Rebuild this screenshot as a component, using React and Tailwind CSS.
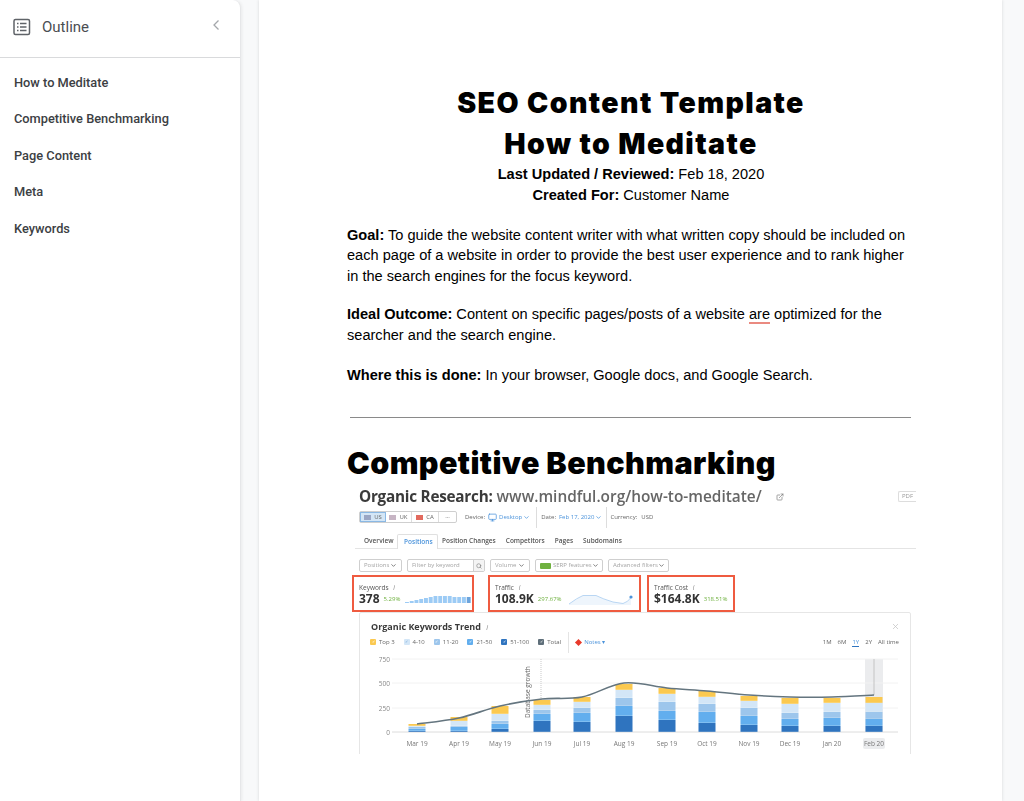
import React from 'react';
import { ChevronDown, ExternalLink, Monitor, Search, X } from 'lucide-react';

const OUTLINE = ['How to Meditate', 'Competitive Benchmarking', 'Page Content', 'Meta', 'Keywords'];

// bottom-up segment heights: dark, mid, light, pale, yellow
const BARS = [
  { x: 417, label: 'Mar 19', seg: [1, 2, 2, 1, 2] },
  { x: 459, label: 'Apr 19', seg: [1, 4, 1, 5, 4] },
  { x: 500, label: 'May 19', seg: [3, 5, 3, 7, 8] },
  { x: 542, label: 'Jun 19', seg: [11, 7, 4, 5, 5] },
  { x: 582, label: 'Jul 19', seg: [10, 9, 5, 6, 5] },
  { x: 624, label: 'Aug 19', seg: [16, 10, 8, 8, 6] },
  { x: 667, label: 'Sep 19', seg: [12, 9, 9, 8, 6] },
  { x: 707, label: 'Oct 19', seg: [9, 11, 8, 7, 6] },
  { x: 749, label: 'Nov 19', seg: [7, 9, 8, 7, 5] },
  { x: 790, label: 'Dec 19', seg: [6, 7, 6, 9, 6] },
  { x: 832, label: 'Jan 20', seg: [6, 8, 6, 9, 5] },
  { x: 874, label: 'Feb 20', seg: [6, 7, 7, 9, 6] },
];
const SEG_COLORS = ['#2f74bf', '#62aeee', '#9dc6ec', '#d3e6f7', '#fbc950'];
const TREND = [724, 718, 706, 699, 697, 683, 688, 691, 695, 697, 697, 695];

// chart svg starts at page x=360, y=650
const OX = 360;
const OY = 650;

function smoothPath(points) {
  let d = `M${points[0][0]} ${points[0][1]}`;
  for (let i = 0; i < points.length - 1; i++) {
    const p0 = points[Math.max(i - 1, 0)];
    const p1 = points[i];
    const p2 = points[i + 1];
    const p3 = points[Math.min(i + 2, points.length - 1)];
    d += ` C${p1[0] + (p2[0] - p0[0]) / 6} ${p1[1] + (p2[1] - p0[1]) / 6} ${p2[0] - (p3[0] - p1[0]) / 6} ${p2[1] - (p3[1] - p1[1]) / 6} ${p2[0]} ${p2[1]}`;
  }
  return d;
}

function OutlineIcon() {
  return (
    <svg width="18" height="18" viewBox="0 0 18 18" fill="none" className="shrink-0">
      <rect x="1" y="1.5" width="15.5" height="15" rx="1.5" stroke="#5f6368" strokeWidth="1.5" />
      <path d="M4 5.5h1.5M7 5.5h6.5M4 9h1.5M7 9h6.5M4 12.5h1.5M7 12.5h6.5" stroke="#5f6368" strokeWidth="1.4" />
    </svg>
  );
}

function Sidebar() {
  return (
    <aside className="w-[241px] shrink-0 bg-white rounded-tr-lg border-r border-[#e6e7e9] shadow-[1px_0_3px_rgba(60,64,67,0.08)] flex flex-col font-['Roboto',sans-serif]">
      <div className="h-[58px] border-b border-[#d9dadc] flex items-center pl-[13px] pr-[20px] pb-[3px]">
        <OutlineIcon />
        <span className="ml-[11px] text-[15px] text-[#4b4e52]">Outline</span>
        <svg width="8" height="12" viewBox="0 0 8 12" fill="none" className="ml-auto mb-[5px]">
          <path d="M6.5 1.5L2 6l4.5 4.5" stroke="#a4a7ab" strokeWidth="1.3" />
        </svg>
      </div>
      <nav className="pt-[6px] flex flex-col">
        {OUTLINE.map((item) => (
          <div key={item} className="h-[36.5px] pl-[14px] flex items-center text-[12.8px] font-medium text-[#3c4043]">{item}</div>
        ))}
      </nav>
    </aside>
  );
}

function FilterBox({ label, width, badge }) {
  return (
    <div className={`${width} h-[13px] border border-[#cfcfcf] rounded-[2px] flex items-center justify-between px-[4px] text-[6px] text-[#a5a5a5] whitespace-nowrap`}>
      <span className="flex items-center gap-[2px]">
        {badge && <span className="w-[11px] h-[6px] rounded-[1px] bg-[#6fb13f]" />}
        {label}
      </span>
      <ChevronDown size={7} strokeWidth={2.5} className="text-[#555] shrink-0" />
    </div>
  );
}

function Metric({ width, gap, title, value, pct, children }) {
  return (
    <div className={`${width} ${gap} h-[37px] border-2 border-[#ef5b40] pl-[5px] pr-[3px] pt-[7px] text-[#333]`}>
      <div className="text-[6.5px] leading-[8px] text-[#555]">{title} <span className="ml-[3px] italic text-[#888]">i</span></div>
      <div className="flex items-center h-[14px]">
        <span className="text-[12px] leading-[14px] font-bold">{value}</span>
        <span className="ml-[4px] text-[6px] mt-[1px] text-[#6fb13f]">{pct}</span>
        {children}
      </div>
    </div>
  );
}

function Legend({ color, label, pale }) {
  return (
    <span className="flex items-center gap-[3px]">
      <span className={`${color} w-[6px] h-[6px] rounded-[1px] flex items-center justify-center text-[4px] leading-none ${pale ? 'text-[#7aa9d6]' : 'text-white'}`}>✓</span>
      {label}
    </span>
  );
}

function KeywordSpark() {
  const heights = [1, 2, 3, 4, 5, 6, 7, 7, 7, 7, 6, 6, 6, 6];
  return (
    <svg width="66" height="9" className="ml-[5px] shrink-0">
      {heights.map((h, i) => (
        <rect key={i} x={i * 4.75} y={8 - h} width="3.9" height={h} fill={i === 13 ? '#6ca4dc' : '#9ccbf5'} />
      ))}
    </svg>
  );
}

function TrafficSpark() {
  return (
    <svg width="66" height="14" className="ml-[7px] shrink-0">
      <path d="M0 12 Q8 6 14 3.5 L27 3.5 Q34 7 44 10 L54 11.5 Q59 10 62 5.5 V13 H0Z" fill="#eef5fc" />
      <path d="M0 12 Q8 6 14 3.5 L27 3.5 Q34 7 44 10 L54 11.5 Q59 10 62 5.5" fill="none" stroke="#a9cdf0" strokeWidth="0.8" />
      <circle cx="62" cy="5" r="1.6" fill="#4b93db" />
    </svg>
  );
}

function TrendChart() {
  const gridY = [659, 683, 708, 732];
  const yLabels = ['750', '500', '250', '0'];
  return (
    <svg width="550" height="105" viewBox={`${OX} ${OY} 550 105`} className="block">
      <rect x="865" y="659" width="18" height="73" fill="#ebecee" />
      <rect x="863" y="738" width="22" height="11" rx="2" fill="#ebecee" />
      {gridY.map((y, i) => (
        <g key={y}>
          <line x1="392" x2="898" y1={y} y2={y} stroke={i === 3 ? '#dcdcdc' : '#f2f2f2'} />
          <text x="390" y={y + 2.5} textAnchor="end" fontSize="6.5" fill="#888" fontFamily="Open Sans">{yLabels[i]}</text>
        </g>
      ))}
      <line x1="541" x2="541" y1="659" y2="700" stroke="#c9c9c9" strokeDasharray="1 1" />
      <text transform="translate(530 718) rotate(-90)" fontSize="6.5" fill="#666" fontFamily="Open Sans">Database growth</text>
      <line x1="874" x2="874" y1="659" y2="695" stroke="#c4c4c4" />
      {BARS.map((bar) => {
        let y = 732;
        return (
          <g key={bar.label}>
            {bar.seg.map((h, i) => {
              y -= h;
              return <rect key={i} x={bar.x - 8.5} y={y} width="17" height={h - 0.2} fill={SEG_COLORS[i]} />;
            })}
            <text x={bar.x} y="745.5" textAnchor="middle" fontSize="6.5" fill="#777" fontFamily="Open Sans">{bar.label}</text>
          </g>
        );
      })}
      <path d={smoothPath(BARS.map((bar, i) => [bar.x, TREND[i]]))} fill="none" stroke="#64757f" strokeWidth="1.6" />
    </svg>
  );
}

function Screenshot() {
  return (
    <div className="w-[569px] h-[268px] overflow-hidden pl-[5px] font-['Open_Sans',sans-serif] blur-[0.35px]">
      <div className="ml-[7px] flex items-center h-[21px]">
        <span className="text-[15.3px] leading-[21px] font-bold text-[#3a3a3a] tracking-[-0.25px]">Organic Research:</span>
        <span className="ml-[4px] text-[15.4px] leading-[21px] font-semibold text-[#666]">www.mindful.org/how-to-meditate/</span>
        <ExternalLink size={8} className="ml-[14px] text-[#777]" />
        <span className="ml-auto w-[18px] h-[11px] border border-[#ddd] border-r-0 rounded-l-[2px] text-[6px] leading-[9px] pl-[3px] text-[#999]">PDF</span>
      </div>
      <div className="ml-[7px] mt-[4px] h-[12px] flex items-center text-[6px] text-[#666]">
        <div className="h-[12px] flex border border-[#cfcfcf] rounded-[2px] text-[6px]">
          <span className="w-[26px] bg-[#d4e6f6] border border-[#8ab8e4] flex items-center justify-center gap-[3px]"><span className="w-[7px] h-[5px] bg-[#9aa6c4]" />US</span>
          <span className="w-[26px] flex items-center justify-center gap-[3px] border-r border-[#ddd]"><span className="w-[7px] h-[5px] bg-[#c7b5c4]" />UK</span>
          <span className="w-[27px] flex items-center justify-center gap-[3px] border-r border-[#ddd]"><span className="w-[7px] h-[5px] bg-[#e26a5e]" />CA</span>
          <span className="w-[17px] leading-[8px] text-center">...</span>
        </div>
        <span className="ml-[8px]">Device:</span>
        <Monitor size={9} className="ml-[3px] text-[#4b93db]" />
        <span className="ml-[2px] text-[#4b93db]">Desktop</span>
        <ChevronDown size={7} strokeWidth={2.5} className="ml-[1px] text-[#4b93db]" />
        <span className="ml-[6px] pl-[4px] border-l border-[#ddd]">Date:</span>
        <span className="ml-[3px] text-[#4b93db]">Feb 17, 2020</span>
        <ChevronDown size={7} strokeWidth={2.5} className="ml-[1px] text-[#4b93db]" />
        <span className="ml-[4px] pl-[3px] border-l border-[#ddd]">Currency:</span>
        <span className="ml-[4px]">USD</span>
      </div>
      <div className="ml-[3px] mt-[10px] h-[16px] flex items-end border-b border-[#e4e4e4] text-[6.5px] font-semibold text-[#555]">
        <span className="w-[42px] h-[14px] pl-[9px] leading-[13px]">Overview</span>
        <span className="w-[41px] h-[15px] -mb-px pl-[6px] leading-[14px] bg-white border border-b-0 border-[#e0e0e0] rounded-t-[2px] text-[#4b93db]">Positions</span>
        <span className="ml-[4px] h-[14px] leading-[13px]">Position Changes</span>
        <span className="ml-[10px] h-[14px] leading-[13px]">Competitors</span>
        <span className="ml-[10px] h-[14px] leading-[13px]">Pages</span>
        <span className="ml-[10px] h-[14px] leading-[13px]">Subdomains</span>
      </div>
      <div className="ml-[7px] mt-[10px] flex text-[6px] whitespace-nowrap">
        <FilterBox label="Positions" width="w-[43px]" />
        <div className="ml-[5px] w-[78px] h-[13px] border border-[#cfcfcf] rounded-[2px] flex items-center justify-between pl-[4px] text-[#a5a5a5]">
          Filter by keyword
          <span className="w-[11px] h-full border-l border-[#cfcfcf] bg-[#f4f4f4] flex items-center justify-center"><Search size={6} className="text-[#666]" /></span>
        </div>
        <div className="ml-[5px]"><FilterBox label="Volume" width="w-[40px]" /></div>
        <div className="ml-[5px]"><FilterBox label="SERP features" width="w-[68px]" badge /></div>
        <div className="ml-[5px]"><FilterBox label="Advanced filters" width="w-[61px]" /></div>
      </div>
      <div className="mt-[3px] flex">
        <Metric width="w-[122px]" title="Keywords" value="378" pct="5.29%"><KeywordSpark /></Metric>
        <Metric width="w-[153px]" gap="ml-[14px]" title="Traffic" value="108.9K" pct="297.67%"><TrafficSpark /></Metric>
        <Metric width="w-[88px]" gap="ml-[6px]" title="Traffic Cost" value="$164.8K" pct="318.51%" />
      </div>
      <div className="ml-[7px] w-[552px] h-[150px] border border-[#e6e6e6] rounded-t-[2px]">
        <div className="flex items-start justify-between pl-[11px] pr-[10px] pt-[8px] h-[23px]">
          <span className="text-[9px] leading-[12px] font-bold text-[#3a3a3a]">Organic Keywords Trend <span className="ml-[3px] italic font-normal text-[#888] text-[7px]">i</span></span>
          <X size={9} className="mt-[1px] text-[#c4c4c4]" />
        </div>
        <div className="flex items-center pl-[10px] pr-[11px] h-[12px] text-[6px] text-[#666]">
          <span className="flex gap-[9px]">
            <Legend color="bg-[#fbc950]" label="Top 3" />
            <Legend color="bg-[#d3e6f7]" label="4-10" pale />
            <Legend color="bg-[#9dc6ec]" label="11-20" />
            <Legend color="bg-[#62aeee]" label="21-50" />
            <Legend color="bg-[#2f74bf]" label="51-100" />
            <Legend color="bg-[#5f6f7a]" label="Total" />
          </span>
          <span className="ml-[7px] pl-[7px] border-l border-[#e4e4e4] flex items-center gap-[3px] text-[#4b93db]">
            <span className="w-[5px] h-[5px] rotate-45 bg-[#e8392b]" />Notes ▾
          </span>
          <span className="ml-auto flex items-start gap-[6px] leading-[8px]">
            <span>1M</span>
            <span>6M</span>
            <span className="text-[#4b93db] border-b border-[#2f74bf]">1Y</span>
            <span>2Y</span>
            <span>All time</span>
          </span>
        </div>
        <div className="mt-[2px]"><TrendChart /></div>
      </div>
    </div>
  );
}

function Page() {
  return (
    <main className="ml-[18px] w-[743px] h-[801px] shrink-0 bg-white shadow-[0_0_3px_rgba(60,64,67,0.18)] pl-[88px] pr-[87px] pt-[83px] font-['Liberation_Sans',sans-serif] text-[14.58px] leading-[20.6px] text-black">
      <div className="text-center">
        <h1 className="font-['Inter',sans-serif] font-black text-[28.5px] leading-[40px] tracking-[1.4px]">SEO Content Template</h1>
        <h1 className="font-['Inter',sans-serif] font-black text-[28.5px] leading-[40px] tracking-[1.4px] mt-[1px]">How to Meditate</h1>
        <p><b>Last Updated / Reviewed:</b> Feb 18, 2020</p>
        <p><b>Created For:</b> Customer Name</p>
      </div>
      <p className="mt-[19.6px]"><b>Goal:</b> To guide the website content writer with what written copy should be included on each page of a website in order to provide the best user experience and to rank higher in the search engines for the focus keyword.</p>
      <p className="mt-[17.6px]"><b>Ideal Outcome:</b> Content on specific pages/posts of a website <span className="border-b-2 border-[#ea8a80]">are</span> optimized for the searcher and the search engine.</p>
      <p className="mt-[19.5px]"><b>Where this is done:</b> In your browser, Google docs, and Google Search.</p>
      <hr className="mt-[31.8px] ml-[3px] w-[561px] border-t border-[#8a8a8a]" />
      <h2 className="mt-[25px] font-['Inter',sans-serif] font-black text-[30.5px] leading-[40px] tracking-[0.4px]">Competitive Benchmarking</h2>
      <div className="mt-[3px]"><Screenshot /></div>
    </main>
  );
}

export default function App() {
  return (
    <div className="w-[1024px] h-[801px] overflow-hidden flex bg-[#f8f9fa]">
      <Sidebar />
      <Page />
    </div>
  );
}
